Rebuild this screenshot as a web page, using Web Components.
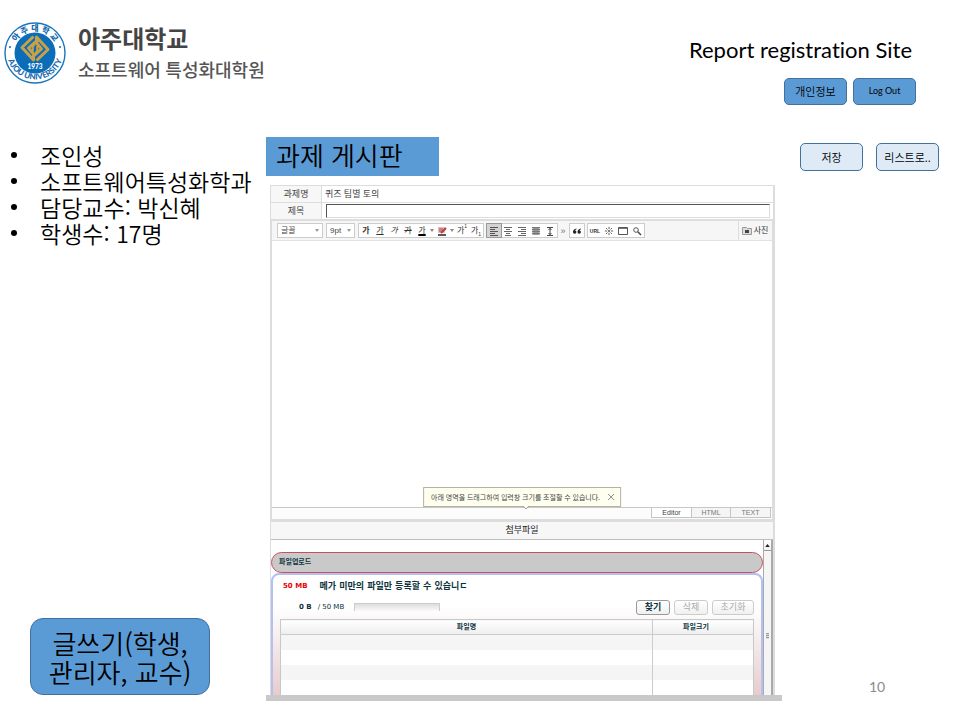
<!DOCTYPE html>
<html lang="ko">
<head>
<meta charset="utf-8">
<title>Report registration Site</title>
<style>
html, body { margin: 0; background: #fff; }
body { font-family: Lato, "Noto Sans CJK KR", sans-serif; color: #000; }
</style>
</head>
<body>
<report-page>
  <site-brand slot="brand"></site-brand>
  <span slot="title">Report registration Site</span>
  <pill-button slot="account">개인정보</pill-button>
  <pill-button slot="account" class="latin">Log Out</pill-button>
  <course-info slot="side">
    <li>조인성</li><li>소프트웨어특성화학과</li><li>담당교수: 박신혜</li><li>학생수: 17명</li>
  </course-info>
  <pill-button slot="write" class="large">글쓰기(학생, 관리자, 교수)</pill-button>
  <span slot="heading">과제 게시판</span>
  <report-board slot="board"></report-board>
  <pill-button slot="actions" class="light">저장</pill-button>
  <pill-button slot="actions" class="light">리스트로..</pill-button>
  <span slot="number">10</span>
</report-page>

<script>
function define(name, html, setup) {
  const template = document.createElement('template');
  template.innerHTML = html;
  customElements.define(name, class extends HTMLElement {
    constructor() {
      super();
      this.attachShadow({ mode: 'open' }).append(template.content.cloneNode(true));
      if (setup) setup(this.shadowRoot, this);
    }
  });
}

define('report-page', `
<style>
:host { display: flex; flex-direction: column; min-height: 100vh; box-sizing: border-box; padding-bottom: 19px; }
header { display: flex; justify-content: space-between; min-height: 115px; padding: 22px 44px 0 4px; }
.user { display: flex; flex-direction: column; align-items: flex-end; padding-top: 12px; }
h1 { margin: 0 4px 0 0; font-size: 22px; line-height: 32px; font-weight: 400; font-variant-ligatures: none; }
.account { display: flex; gap: 6px; padding-top: 12px; }
main { flex: 1; display: grid; grid-template-columns: 266px minmax(0, 1fr) 178px; }
.side, .center, .right { display: flex; flex-direction: column; }
.side { justify-content: space-between; align-items: flex-start; padding: 6px 0; }
.write { padding-left: 30px; }
h2 { margin: 0 0 9px; box-sizing: border-box; min-width: 173px; align-self: flex-start; padding: 0 10px; background: #5b9bd5; font-size: 26px; font-weight: 350; line-height: 39px; }
.board { flex: 1; display: flex; padding: 0 7px 0 4px; }
.bar { height: 6px; background: #c9c9c9; }
.right { justify-content: space-between; padding: 6px 21px 4px 18px; }
.actions { display: flex; gap: 13px; }
.number { color: #8b8b8b; font-size: 14px; line-height: 20px; padding-left: 69px; }
</style>
<header>
  <slot name="brand"></slot>
  <div class="user"><h1><slot name="title"></slot></h1><div class="account"><slot name="account"></slot></div></div>
</header>
<main>
  <div class="side"><slot name="side"></slot><div class="write"><slot name="write"></slot></div></div>
  <div class="center"><h2><slot name="heading"></slot></h2><div class="board"><slot name="board"></slot></div><div class="bar"></div></div>
  <div class="right"><div class="actions"><slot name="actions"></slot></div><div class="number"><slot name="number"></slot></div></div>
</main>`);

define('site-brand', `
<style>
:host { display: flex; gap: 12px; align-items: flex-start; }
svg { width: 62px; height: 62px; flex: none; }
.name { display: flex; flex-direction: column; color: #444; font-weight: 700; }
strong { font-size: 24px; line-height: 34px; font-weight: 700; }
span { font-size: 18px; line-height: 28px; font-weight: 500; color: #555; }
</style>
<svg viewBox="0 0 62 62" role="img" aria-label="Ajou University">
  <defs><path id="top" d="M9 31a22 22 0 0 1 44 0"/><path id="bottom" d="M2.500 29a28.500 28.500 0 0 0 57 0"/></defs>
  <circle cx="31" cy="31" r="30" fill="#fff" stroke="#1b75bc" stroke-width="1.400"/>
  <circle cx="31" cy="31" r="20.500" fill="#0b6db7"/>
  <text font-size="8" font-weight="900" fill="#1669ae" font-family="Noto Sans CJK KR"><textPath href="#top" startOffset="50%" text-anchor="middle">아 주 대 학 교</textPath></text>
  <text font-size="8" font-weight="900" fill="#1669ae" font-family="Lato"><textPath href="#bottom" startOffset="50%" text-anchor="middle">AJOU UNIVERSITY</textPath></text>
  <circle cx="6" cy="25" r="1" fill="#1669ae"/><circle cx="56" cy="25" r="1" fill="#1669ae"/>
  <g fill="none" stroke="#c9a04a" stroke-width="3" stroke-linejoin="round">
    <path d="M29.500 14.500L18 25.500 29.500 38V32L24.500 26 34 17.500M32.500 38.500L44 27.500 32.500 15V21L37.500 27 28 35.500"/>
    <path d="M28.700 29.500V24.500L31 22M33.300 24v5L31 32" stroke-width="2.200"/>
  </g>
  <text x="31" y="47" text-anchor="middle" font-size="6.500" font-weight="900" fill="#fff" font-family="Lato">1973</text>
</svg>
<div class="name"><strong>아주대학교</strong><span>소프트웨어 특성화대학원</span></div>`);

define('pill-button', `
<style>
:host { display: block; }
button { display: block; box-sizing: border-box; width: 63px; min-height: 27px; padding: 0 0 1px; border: 1px solid #41719c; border-radius: 5px; background: #5b9bd5; color: #000; font: 350 11px/14px "Noto Sans CJK KR", sans-serif; }
:host(.latin) button { font: 400 9px/14px Lato, sans-serif; }
:host(.light) button { background: #deebf7; min-height: 28px; }
:host(.large) button { width: 180px; min-height: 77px; padding: 8px 16px; border-radius: 13px; font-size: 26px; line-height: 29px; }
</style>
<button type="button"><slot></slot></button>`);

define('course-info', `
<style>
:host { display: block; }
.wrap { display: flex; margin-top: -1px; }
.dots { display: flex; flex-direction: column; gap: 20px; padding: 10px 0 0 11px; }
.dots i { width: 6px; height: 6px; border-radius: 50%; background: #000; }
ul { margin: 0; padding: 0 0 0 23px; font: 350 23px/26px "Noto Sans CJK KR", sans-serif; list-style: none; }
::slotted(li) { display: block; white-space: nowrap; }
</style>
<div class="wrap"><div class="dots" aria-hidden="true"><i></i><i></i><i></i><i></i></div><ul><slot></slot></ul></div>`);

define('report-board', `
<style>
:host { flex: 1; min-width: 0; display: flex; flex-direction: column; box-sizing: border-box; border: 1px solid #dcdcdc; border-bottom: 0; border-right-width: 2px; color: #444; font-size: 9px; }
.row { display: grid; grid-template-columns: 51px 1fr; height: 17px; line-height: 16px; border-bottom: 1px solid #dedede; box-sizing: border-box; }
.row > :first-child { background: #f7f7f7; border-right: 1px solid #dedede; text-align: center; }
.row > span:last-child { padding-left: 3px; }
.field { display: flex; padding: 1px 3px 1px 4px; }
input { flex: 1; min-width: 0; height: 14px; box-sizing: border-box; padding: 0 4px; border: 1px solid #ddd; border-top: 1px solid #555; border-left: 1px solid #555; outline: 0; font: inherit; }
editor-area { flex: 1; }
h3 { margin: 0; height: 19px; box-sizing: border-box; border-bottom: 1px solid #bcbcbc; border-top: 1px solid #ddd; background: #f7f7f7; text-align: center; font-size: 9px; line-height: 16px; font-weight: 400; color: #222; }
</style>
<div class="row"><span>과제명</span><span>퀴즈 팀별 토의</span></div>
<div class="row"><label for="subject">제목</label><div class="field"><input id="subject" type="text"></div></div>
<editor-area></editor-area>
<h3>첨부파일</h3>
<file-upload></file-upload>`);

define('editor-area', `
<style>
:host { display: flex; flex-direction: column; border: 1px solid #ddd; border-bottom-width: 2px; }
.area { position: relative; flex: 1; display: flex; border-bottom: 1px solid #c8c8c8; }
textarea { flex: 1; min-width: 0; border: 0; padding: 6px; resize: none; outline: 0; font: 12px/16px "Noto Sans CJK KR", sans-serif; }
.tip { position: absolute; bottom: 0; left: 50%; transform: translateX(-50%); display: flex; align-items: center; gap: 7px; box-sizing: border-box; height: 20px; padding: 0 5px 0 7px; border: 1px solid #b5b3a0; background: #fffff0; color: #444; font-size: 7px; line-height: 16px; white-space: nowrap; }
.tip > svg { position: absolute; left: 50%; top: 17px; width: 8px; height: 5px; }
.tip button { display: flex; border: 0; padding: 0; background: none; }
.tip button svg { width: 8px; height: 8px; }
.tabs { display: flex; justify-content: flex-end; height: 11px; padding-right: 1px; background: #fcfcfc; }
.tabs button { box-sizing: border-box; width: 39px; height: 10px; padding: 0; border: 1px solid #c4c4c4; border-top: 0; border-left: 0; background: #f5f5f5; color: #777; font: 7px/9px "Liberation Sans", sans-serif; }
.tabs .on { width: 41px; border-left: 1px solid #c4c4c4; background: #fff; color: #444; }
.tabs button:last-child { width: 40px; }
</style>
<editor-toolbar></editor-toolbar>
<div class="area"><textarea aria-label="내용"></textarea>
  <div class="tip"><span>아래 영역을 드래그하여 입력창 크기를 조절할 수 있습니다.</span>
    <button type="button" aria-label="닫기"><svg viewBox="0 0 8 8"><path d="M1 1l6 6M7 1L1 7" stroke="#888"/></svg></button>
    <svg viewBox="0 0 8 5"><path d="M1 1l3 3 3-3" fill="#fffff0" stroke="#999"/></svg></div>
</div>
<div class="tabs"><button type="button" class="on">Editor</button><button type="button">HTML</button><button type="button">TEXT</button></div>`);

define('editor-toolbar', `
<style>
:host { display: flex; align-items: center; height: 20px; box-sizing: border-box; padding: 0 1px 0 5px; border-bottom: 1px solid #e2e2e2; background: #f6f6f6; color: #333; font-size: 8px; }
.tools { flex: 1; display: flex; align-items: center; gap: 3px; }
.group, select { box-sizing: border-box; height: 15px; background: #fff; }
.group { display: flex; align-items: center; box-shadow: 0 0 0 1px #ccc; height: 13px; margin-left: 1px; }
select { appearance: none; width: 46px; padding: 0 0 0 3px; border: 1px solid #ccc; color: #444; font: 8px/13px "Liberation Sans", "Noto Sans CJK KR", sans-serif; background: #fff url("data:image/svg+xml,%3Csvg xmlns='http://www.w3.org/2000/svg' width='5' height='3'%3E%3Cpath d='M0 0h4L2 3z' fill='%23999'/%3E%3C/svg%3E") no-repeat right 2px center; border-radius: 0; }
select.size { width: 29px; }
button { flex: none; display: flex; align-items: center; justify-content: center; width: 14px; height: 13px; padding: 0; border: 0; background: none; color: inherit; font: 8px/12px "Liberation Sans", "Noto Sans CJK KR", sans-serif; }
button svg { width: 10px; height: 10px; }
button.drop { width: 6px; }
button.drop svg { width: 4px; height: 3px; }
.on { background: #d3d3d3; box-shadow: 0 0 0 1px #999; }
.u { text-decoration: underline; } .i { font-style: italic; } .s { text-decoration: line-through; }
.c { text-decoration: underline 2px #000; } .b { font-weight: 700; }
sup, sub { font-size: 5px; line-height: 5px; } sup { align-self: flex-start; } sub { align-self: flex-end; }
.url { font-size: 5px; font-weight: 700; }
.more { font-size: 9px; width: 6px; color: #777; }
.photo { width: 33px; height: 19px; gap: 2px; border-left: 1px solid #ddd; font-size: 8px; }
</style>
<div class="tools">
  <select aria-label="글꼴"><option>글꼴</option></select>
  <select class="size" aria-label="크기"><option>9pt</option></select>
  <div class="group">
    <button class="b">가</button><button class="u">가</button><button class="i">가</button><button class="s">가</button>
    <button class="c">가</button><button class="drop" aria-label="글자색"><svg viewBox="0 0 4 3"><path d="M0 0h4L2 3z" fill="#888"/></svg></button>
    <button aria-label="형광펜"><svg viewBox="0 0 10 10"><path d="M1 1h7v6H1z" fill="#e5bcbc"/><path d="M2 3h4M2 5h3" stroke="#a44"/><path d="M9 2L4 7" stroke="#b33c3c" stroke-width="2"/><path d="M1 9h8" stroke="#222" stroke-width="1.500"/></svg></button><button class="drop" aria-label="배경색"><svg viewBox="0 0 4 3"><path d="M0 0h4L2 3z" fill="#888"/></svg></button>
    <button>가<sup>1</sup></button><button>가<sub>1</sub></button>
  </div>
  <div class="group">
    <button class="on" aria-label="왼쪽"><svg viewBox="0 0 10 10"><path d="M1 1.500h8M1 3.500h5M1 5.500h8M1 7.500h5M1 9.500h8" stroke="#555"/></svg></button>
    <button aria-label="가운데"><svg viewBox="0 0 10 10"><path d="M1 1.500h8M3 3.500h4M1 5.500h8M3 7.500h4M2 9.500h6" stroke="#666"/></svg></button>
    <button aria-label="오른쪽"><svg viewBox="0 0 10 10"><path d="M1 1.500h8M4 3.500h5M1 5.500h8M4 7.500h5M1 9.500h8" stroke="#666"/></svg></button>
    <button aria-label="양쪽"><svg viewBox="0 0 10 10"><path d="M1.500 1h7v8h-7z" fill="#999"/><path d="M1 1.500h8M1 3.500h8M1 5.500h8M1 7.500h8" stroke="#777"/></svg></button>
    <button aria-label="줄 간격"><svg viewBox="0 0 10 10"><path d="M2 1.500h6M2 9.500h6M5 2v7M3.500 4L5 2.500 6.500 4M3.500 7L5 8.500 6.500 7" fill="none" stroke="#444"/></svg></button>
  </div>
  <button class="more">»</button>
  <div class="group"><button aria-label="인용"><svg viewBox="0 0 10 10"><path d="M4.500 2.500Q1 3 1 6a1.700 1.700 0 1 0 2-1.600q.3-.9 1.500-1.200zM9 2.500Q5.500 3 5.500 6a1.700 1.700 0 1 0 2-1.600Q7.800 3.500 9 3.200z" fill="#222"/></svg></button></div>
  <div class="group">
    <button class="url">URL</button>
    <button aria-label="특수문자"><svg viewBox="0 0 10 10"><path d="M5 .8v2.400M5 6.800v2.400M.8 5h2.400M6.800 5h2.400M2 2l1.500 1.500M8 2L6.500 3.500M2 8l1.500-1.500M8 8L6.500 6.500" stroke="#666"/><circle cx="5" cy="5" r="1" fill="#555"/></svg></button>
    <button aria-label="표"><svg viewBox="0 0 10 10"><path d="M.5 1.500h9v7h-9z" fill="#fff" stroke="#555"/><path d="M1 2.500h8" stroke="#777"/></svg></button>
    <button aria-label="찾기"><svg viewBox="0 0 10 10"><circle cx="4" cy="4" r="2.300" fill="none" stroke="#555"/><path d="M5.800 5.800L9 9" stroke="#444" stroke-width="1.500"/></svg></button>
  </div>
</div>
<button class="photo"><svg viewBox="0 0 10 10"><path d="M.5 1.500h4l1 1h4v6h-9z" fill="#ddd" stroke="#999"/><path d="M3 4h4v3H3z" fill="#444"/></svg>사진</button>`,
root => root.querySelectorAll('button').forEach(b => b.type = 'button'));

define('file-upload', `
<style>
:host { display: flex; height: 155px; overflow: hidden; color: #0b333c; font: 8px/10px "DejaVu Sans", "Noto Sans CJK KR", sans-serif; }
.body { flex: 1; min-width: 0; padding-top: 12px; }
h4 { box-sizing: border-box; height: 21px; margin: 0; padding-left: 7px; border: 1px solid #c8505a; border-radius: 11px; background: #c9c9c9; font-size: 7px; line-height: 19px; }
.panel { box-sizing: border-box; height: 130px; padding: 6px 7px 0; border: 2px solid #b4bff2; border-radius: 8px 8px 0 0; background: linear-gradient(#fff 25%, #e6c8c8 100%); }
.limit { display: flex; align-items: center; gap: 12px; padding-left: 3px; height: 10px; font-size: 7px; }
.limit b { color: #e00; }
.limit strong { white-space: nowrap; font-size: 9px; line-height: 10px; }
.status { display: flex; align-items: center; height: 20px; margin: 6px 0 2px; padding-left: 19px; font-size: 7px; }
.status b { padding-right: 6px; }
progress { appearance: none; width: 86px; height: 8px; margin-left: 10px; border: 1px solid #ccc; border-bottom: 0; box-sizing: border-box; background: linear-gradient(#ddd, #fafafa); }
progress::-webkit-progress-bar { background: transparent; }
.buttons { flex: 1; display: flex; justify-content: flex-end; gap: 4px; }
button { box-sizing: border-box; width: 34px; height: 15px; padding: 0; border: 1px solid #ccc; border-radius: 3px; background: linear-gradient(#fff, #f0f0f0); color: #aaa; font: 9px/12px "Noto Sans CJK KR", sans-serif; }
button.find { border-color: #999; color: #0b333c; font-weight: 700; }
button.reset { width: 42px; }
table { width: 100%; border-collapse: collapse; table-layout: fixed; background: #fff; border: 1px solid #c6c9ca; }
th { height: 14px; padding: 0; background: linear-gradient(#fff, #eee); border-bottom: 1px solid #ccc; font-size: 7px; line-height: 12px; }
th:last-child { box-sizing: border-box; width: 101px; padding-right: 14px; }
th:last-child, td:last-child { border-left: 1px solid #ccc; }
td { height: 15px; padding: 0; box-sizing: border-box; }
tbody tr:nth-child(odd) { background: #f5f5f5; }
.scroll { flex: none; display: flex; flex-direction: column; width: 10px; box-sizing: border-box; border-left: 1px solid #aaa; border-right: 2px solid #aaa; background: #f5f5f5; }
.scroll button { width: 100%; height: 11px; border-radius: 0; border-width: 0 0 1px; border-color: #999; display: flex; align-items: center; justify-content: center; }
.scroll button svg { width: 5px; height: 3px; }
.thumb { flex: 1; display: flex; align-items: center; justify-content: center; padding-top: 26px; }
.thumb i { width: 3px; height: 6px; background: repeating-linear-gradient(#999 0 1px, #ddd 1px 2px); }
</style>
<div class="body">
  <h4>파일업로드</h4>
  <div class="panel">
    <div class="limit"><b>50 MB</b><strong>메가 미만의 파일만 등록할 수 있습니ㄷ</strong></div>
    <div class="status"><b>0 B</b><span>/ 50 MB</span><progress value="0" max="50" aria-label="사용량"></progress>
      <div class="buttons"><button type="button" class="find">찾기</button><button type="button">삭제</button><button type="button" class="reset">초기화</button></div></div>
    <table><thead><tr><th>파일명</th><th>파일크기</th></tr></thead>
      <tbody><tr><td></td><td></td></tr><tr><td></td><td></td></tr><tr><td></td><td></td></tr><tr><td></td><td></td></tr><tr><td></td><td></td></tr></tbody></table>
  </div>
</div>
<div class="scroll"><button type="button" aria-label="위로"><svg viewBox="0 0 6 4"><path d="M0 4l3-4 3 4z" fill="#222"/></svg></button><div class="thumb"><i></i></div></div>`);
</script>
</body>
</html>
